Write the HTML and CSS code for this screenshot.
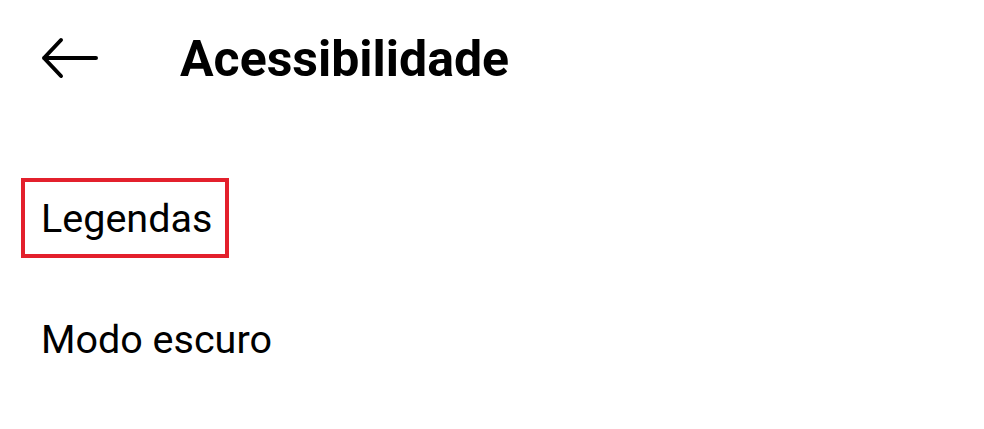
FILE: index.html
```html
<!DOCTYPE html>
<html lang="pt">
<head>
<meta charset="utf-8">
<link rel="stylesheet" href="styles.css">
</head>
<body>
<div class="screen">
  <header class="header">
    <svg class="back" width="61" height="44" viewBox="0 0 61 44" aria-hidden="true">
      <path d="M4 21H56M21 3L4 21L21 39" fill="none" stroke="#000" stroke-width="4" stroke-linecap="round" stroke-linejoin="round"/>
    </svg>
    <h1 class="title">Acessibilidade</h1>
  </header>
  <ul class="menu">
    <li class="item highlighted"><span>Legendas</span></li>
    <li class="item"><span>Modo escuro</span></li>
  </ul>
</div>
</body>
</html>
```

FILE: styles.css
```css
html, body {
  margin: 0;
  padding: 0;
  background: #fff;
}
body {
  font-family: Roboto, "Liberation Sans", sans-serif;
  color: #000;
  width: 984px;
  height: 429px;
  overflow: hidden;
}
.screen {
  display: flex;
  flex-direction: column;
}
.header {
  height: 118px;
  display: flex;
  align-items: center;
  padding-left: 40px;
}
.back {
  display: block;
  margin-right: 79px;
}
.title {
  margin: 0;
  font-size: 50px;
  font-weight: 700;
  line-height: normal;
}
.menu {
  list-style: none;
  margin: 60px 0 0 21px;
  padding: 0;
  display: flex;
  flex-direction: column;
  align-items: flex-start;
}
.item {
  font-size: 39.5px;
  line-height: normal;
  padding: 13px 13px 12px 16px;
  border: 4px solid transparent;
}
.item.highlighted {
  border-color: #e3202c;
}
.item + .item {
  margin-top: 41px;
}
```
